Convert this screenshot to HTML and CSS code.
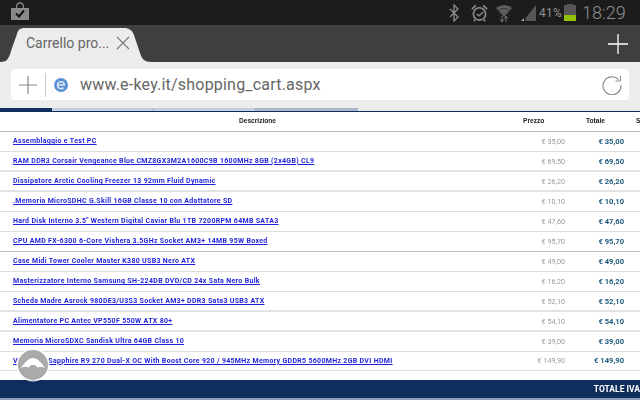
FILE: index.html
```html
<!DOCTYPE html>
<html lang="it">
<head>
<meta charset="utf-8">
<title>Carrello</title>
<link rel="stylesheet" href="styles.css">
</head>
<body>
<div class="status">
  <svg class="bag" width="20" height="20" viewBox="0 0 20 20"><path d="M6.500 7V5.500a3.500 3.500 0 0 1 7 0V7" fill="none" stroke="#8a8a8a" stroke-width="1.300"/><rect x="1" y="7" width="18" height="12" fill="#8a8a8a"/><path d="M6 12.500l3 3 5-6" fill="none" stroke="#111" stroke-width="2"/></svg>
  <div class="status-right">
    <svg width="12" height="18" viewBox="0 0 12 18"><path d="M2 5l8 8-4 4V1l4 4-8 8" fill="none" stroke="#8c8c8c" stroke-width="1.300"/></svg>
    <svg class="alarm" width="17" height="18" viewBox="0 0 18 18"><circle cx="9" cy="10" r="6.500" fill="none" stroke="#8c8c8c" stroke-width="1.700"/><path d="M6 10l2.500 2L13 8" fill="none" stroke="#8c8c8c" stroke-width="1.300"/><path d="M1 5l4-4M17 5l-4-4M4.500 16L3 17.500M13.500 16l1.500 1.500" fill="none" stroke="#8c8c8c" stroke-width="1.800"/></svg>
    <svg class="wifi" width="18" height="18" viewBox="0 0 18 18"><path d="M1 4a12 12 0 0 1 16 0l-8 9z" fill="#5e5e5e"/><path d="M3.500 6.500a9 9 0 0 1 11 0" fill="none" stroke="#2a2a2a" stroke-width=".8"/><path d="M7 12v6M5.500 15.500L7 18l1.500-2.500M11 18v-6M9.500 14.500L11 12l1.500 2.500" fill="none" stroke="#777" stroke-width="1"/></svg>
    <svg class="signal" width="16" height="18" viewBox="0 0 16 18"><path d="M16 1v16H5.500v-3z" fill="#555"/><path d="M4 14v3H1z" fill="#aaa"/></svg>
    <span class="pct">41%</span>
    <div class="battery"><div class="battery-cap"></div><div class="battery-empty"></div><div class="battery-fill"></div></div>
    <span class="clock">18:29</span>
  </div>
</div>
<div class="tabbar">
  <div class="tab">
    <svg class="tab-shape" width="152" height="34" viewBox="0 0 152 34"><path d="M0 34c8 0 9-4 12-14l5-14C18 2 20 0 25 0h99c5 0 8 2 10 7l6 18c2 6 4 9 12 9z" fill="#ececec"/></svg>
    <span class="tab-title">Carrello pro...</span>
    <svg class="tab-close" width="14" height="14" viewBox="0 0 14 14"><path d="M1 1l12 12M13 1L1 13" stroke="#777" stroke-width="1.100" fill="none"/></svg>
  </div>
  <svg class="newtab" width="20" height="20" viewBox="0 0 20 20"><path d="M10 0v20M0 10h20" stroke="#fff" stroke-width="1.300"/></svg>
</div>
<div class="addr-strip">
  <div class="addr">
    <svg width="18" height="18" viewBox="0 0 18 18"><path d="M9 0v18M0 9h18" stroke="#888" stroke-width="1.200"/></svg>
    <div class="addr-sep"></div>
    <svg width="16" height="16" viewBox="0 0 16 16"><circle cx="8" cy="8" r="7" fill="#5b8fd6"/><path d="M4.500 8h7a3.500 3.500 0 1 0-1 2.600" fill="none" stroke="#dfe9f7" stroke-width="1.500"/></svg>
    <span class="url">www.e-key.it/shopping_cart.aspx</span>
    <svg class="reload" width="20" height="20" viewBox="0 0 20 20"><path d="M16.500 4.500A9 9 0 1 0 19 10" fill="none" stroke="#8c8c8c" stroke-width="1.200"/><path d="M18.500 1v5h-5" fill="none" stroke="#8c8c8c" stroke-width="1"/></svg>
  </div>
</div>
<div class="progress"><i class="p1"></i><i class="p2"></i><i class="p2"></i><i class="p4"></i></div>
<div class="rule"></div>
<div class="page">
  <div class="row head"><span class="desc">Descrizione</span><span class="prezzo">Prezzo</span><span class="totale">Totale</span><span class="extra">S</span></div>
  <div class="row"><a href="#">Assemblaggio e Test PC</a><span class="price">€ 35,00</span><span class="total">€ 35,00</span></div>
  <div class="row thick"><a href="#">RAM DDR3 Corsair Vengeance Blue CMZ8GX3M2A1600C9B 1600MHz 8GB (2x4GB) CL9</a><span class="price">€ 69,50</span><span class="total">€ 69,50</span></div>
  <div class="row thick"><a href="#">Dissipatore Arctic Cooling Freezer 13 92mm Fluid Dynamic</a><span class="price">€ 26,20</span><span class="total">€ 26,20</span></div>
  <div class="row"><a href="#">.Memoria MicroSDHC G.Skill 16GB Classe 10 con Adattatore SD</a><span class="price">€ 10,10</span><span class="total">€ 10,10</span></div>
  <div class="row"><a href="#">Hard Disk Interno 3.5" Western Digital Caviar Blu 1TB 7200RPM 64MB SATA3</a><span class="price">€ 47,60</span><span class="total">€ 47,60</span></div>
  <div class="row dark"><a href="#">CPU AMD FX-6300 6-Core Vishera 3.5GHz Socket AM3+ 14MB 95W Boxed</a><span class="price">€ 95,70</span><span class="total">€ 95,70</span></div>
  <div class="row"><a href="#">Case Midi Tower Cooler Master K380 USB3 Nero ATX</a><span class="price">€ 49,00</span><span class="total">€ 49,00</span></div>
  <div class="row"><a href="#">Masterizzatore Interno Samsung SH-224DB DVD/CD 24x Sata Nero Bulk</a><span class="price">€ 16,20</span><span class="total">€ 16,20</span></div>
  <div class="row thick"><a href="#">Scheda Madre Asrock 980DE3/U3S3 Socket AM3+ DDR3 Sata3 USB3 ATX</a><span class="price">€ 52,10</span><span class="total">€ 52,10</span></div>
  <div class="row thick"><a href="#">Alimentatore PC Antec VP550F 550W ATX 80+</a><span class="price">€ 54,10</span><span class="total">€ 54,10</span></div>
  <div class="row"><a href="#">Memoria MicroSDXC Sandisk Ultra 64GB Class 10</a><span class="price">€ 39,00</span><span class="total">€ 39,00</span></div>
  <div class="row short"><a href="#">VGA AMD Sapphire R9 270 Dual-X OC With Boost Core 920 / 945MHz Memory GDDR5 5600MHz 2GB DVI HDMI</a><span class="price">€ 149,90</span><span class="total">€ 149,90</span></div>
  <div class="spacer"></div>
  <div class="footer"><span>TOTALE IVA</span></div>
  <div class="under"></div>
</div>
<div class="fab"><svg width="30" height="30" viewBox="0 0 30 30"><path d="M3 18C7 12 11 8 15 8s8 4 12 10c-3-1.500-5-1.500-7.500-.5C18 15.500 17 15 15 15s-3 .5-4.500 2.500C8 16.500 6 16.500 3 18z" fill="#fff"/></svg></div>
</body>
</html>
```
FILE: styles.css
```css
html, body {
  margin: 0;
  padding: 0;
  width: 640px;
  height: 400px;
  overflow: hidden;
  background: #fff;
  font-family: "Roboto", sans-serif;
}
.status {
  height: 25px;
  background: #1c1c1c;
  display: flex;
  align-items: center;
  justify-content: space-between;
  padding: 0 15px 0 10px;
}
.bag { margin-top: -4px; }
.status-right { display: flex; align-items: center; }
.alarm { margin-left: 11px; }
.wifi { margin-left: 7px; }
.signal { margin-left: 7px; }
.pct { color: #8f8f8f; font-size: 12px; margin-left: 3px; width: 22px; white-space: nowrap; letter-spacing: .3px; }
.battery { width: 12px; height: 17px; margin-left: 3px; display: flex; flex-direction: column; align-items: center; }
.battery-cap { width: 6px; height: 1px; background: #555; }
.battery-empty { width: 12px; height: 10px; background: #555; }
.battery-fill { width: 12px; height: 6px; background: #92c300; }
.clock { color: #8f8f8f; font-size: 18px; margin-left: 6px; width: 43px; white-space: nowrap; font-weight: 300; }
.tabbar {
  height: 37px;
  background: #3f3f3f;
  display: flex;
  align-items: flex-end;
  justify-content: space-between;
  padding-right: 12px;
}
.tab {
  position: relative;
  width: 152px;
  height: 34px;
  display: flex;
  align-items: center;
  padding: 0 0 4px 26px;
  box-sizing: border-box;
}
.tab-shape { position: absolute; left: 0; top: 0; }
.tab-title { position: relative; font-size: 14px; color: #666; white-space: nowrap; }
.tab-close { position: relative; margin-left: 7px; }
.newtab { align-self: center; }
.addr-strip { height: 46px; background: #ececec; padding: 7px 11px 7px 11px; box-sizing: border-box; }
.addr {
  height: 31px;
  background: #fff;
  border-radius: 4px;
  display: flex;
  align-items: center;
  padding-left: 8px;
}
.addr-sep { width: 1px; height: 24px; background: #ccc; margin: 0 7px 0 8px; }
.url { font-size: 16px; color: #666; margin-left: 11px; letter-spacing: .2px; }
.reload { margin-left: auto; margin-right: 7px; }
.progress { height: 3px; display: flex; background: #e8e8e8; }
.progress i { display: block; height: 3px; }
.p1 { width: 52px; background: #0f2e5e; }
.p2 { width: 102px; box-sizing: border-box; background: #c3cfde; border-right: 1px solid #a4aeb8; }
.p4 { width: 102px; background: #a9b9cd; }
.rule { height: 1px; background: #0f2e5e; }
.page { display: flex; flex-direction: column; font-family: "Roboto", sans-serif; filter: blur(.25px); }
.row {
  height: 20px;
  box-sizing: border-box;
  border-bottom: 1px solid #dcdcdc;
  display: flex;
  align-items: center;
  position: relative;
  font-size: 7px;
  padding: 0 0 1px 13px;
}
.row.thick { border-bottom: 2px solid #e2e2e2; padding-bottom: 0; }
.row.dark { border-bottom-color: #bdbdbd; }
.row.short { height: 19px; }
.row a { color: #1f1fdc; font-weight: 700; font-size: 7px; letter-spacing: .31px; white-space: nowrap; text-decoration: underline; }
.head { border-bottom: 1px solid #b8b8b8; padding-bottom: 2px; font-family: "Liberation Sans", sans-serif; font-weight: 700; color: #222; font-size: 6.600px; }
.desc { position: absolute; left: 239px; }
.prezzo { position: absolute; left: 523px; }
.totale { position: absolute; left: 586px; }
.extra { position: absolute; left: 636px; }
.price { position: absolute; right: 75px; color: #999; font-family: "Roboto", sans-serif; font-size: 7.200px; }
.total { position: absolute; right: 16px; color: #1c5a7a; font-weight: 700; font-size: 7.600px; }
.spacer { height: 9px; }
.footer {
  height: 18px;
  background: #0f2e5e;
  color: #fff;
  font-weight: 700;
  font-size: 8.500px;
  display: flex;
  align-items: center;
  justify-content: flex-end;
}
.under { height: 2px; background: #8b9cb8; }
.fab {
  position: absolute;
  left: 18px;
  top: 350px;
  width: 30px;
  height: 30px;
  background: #aaa;
  border-radius: 50%;
  box-shadow: 0 0 0 1.500px rgba(255,255,255,.8);
  display: flex;
  align-items: center;
  justify-content: center;
}
```
